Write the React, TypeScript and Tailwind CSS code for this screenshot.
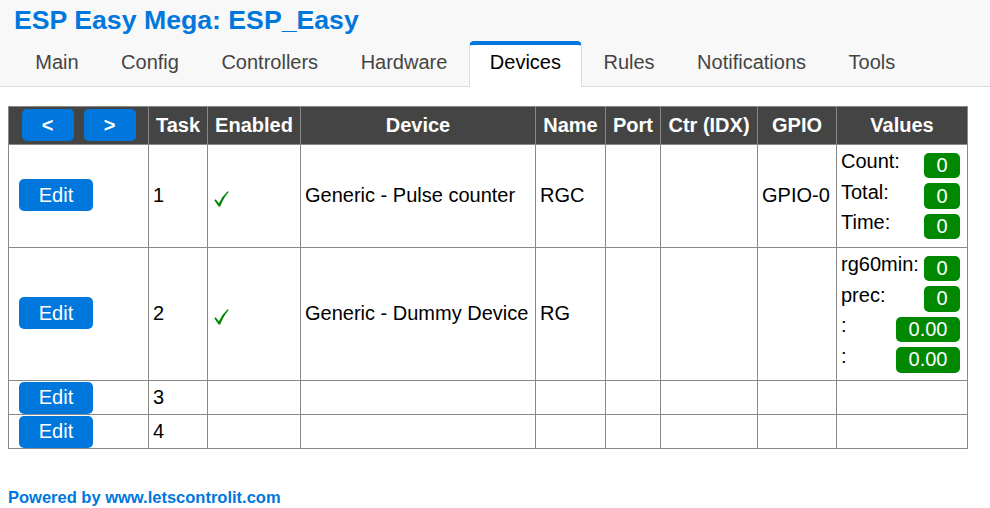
import React from "react";

const tabs = ["Main", "Config", "Controllers", "Hardware", "Devices", "Rules", "Notifications", "Tools"];

function Badge({ v }: { v: string }) {
  return (
    <div className="my-[2.5px] mr-[3px] rounded-[5px] bg-[#080] px-[12.5px] py-[1.25px] text-[20px] leading-[23px] text-white">
      {v}
    </div>
  );
}

function Vals({ items }: { items: [string, string][] }) {
  return (
    <div>
      {items.map(([l, v], i) => (
        <div key={i} className="flex items-start justify-between">
          <span className="whitespace-nowrap leading-[23px]">{l}</span>
          <Badge v={v} />
        </div>
      ))}
    </div>
  );
}

function EditBtn() {
  return (
    <div className="ml-[10px] inline-flex h-[32px] w-[74px] items-center justify-center rounded-[5px] bg-[#07d] text-[20px] leading-[23px] text-white">
      Edit
    </div>
  );
}

const Check = () => (
  <svg width="15" height="16" viewBox="0 0 15 16" className="ml-[2px] mt-[7px] block">
    <path
      d="M0.3 9.2 L1.6 8.3 L4.9 12.2 Q8.2 5.2 13.6 0.2 L14.7 1.1 Q9.6 6.8 6.2 15.6 L4.6 15.6 Z"
      fill="#080"
    />
  </svg>
);

export default function App() {
  const td = "border border-[#888] px-[4px] align-middle";
  const th = "border border-[#888] bg-[#444] px-[4px] text-center align-middle font-bold text-white";
  return (
    <div className="min-h-[508px] bg-white font-['Liberation_Sans',Arial,sans-serif] text-[20px] text-black">
      <div className="border-b border-[#ddd] bg-[#f8f8f8] px-[14px]">
        <h1 className="pt-[5px] text-[26.67px] font-bold leading-[30px] text-[#07d]">ESP Easy Mega: ESP_Easy</h1>
        <div className="mt-[6px] flex items-end">
          {tabs.map((t) => {
            const active = t === "Devices";
            return (
              <div
                key={t}
                className={
                  active
                    ? "-mb-[1px] rounded-t-[5px] border-x border-t-[4px] border-x-[#ddd] border-t-[#07d] bg-white px-[20.25px] pb-[13px] pt-[6px] leading-[23px] text-black"
                    : "-mb-[1px] border-x border-t-[4px] border-transparent px-[20.25px] pb-[13px] pt-[6px] leading-[23px] text-[#444]"
                }
              >
                {t}
              </div>
            );
          })}
        </div>
      </div>

      <table className="ml-[8px] mt-[19px] w-[959px] table-fixed border-collapse">
        <colgroup>
          <col className="w-[140px]" />
          <col className="w-[59px]" />
          <col className="w-[93px]" />
          <col className="w-[235px]" />
          <col className="w-[70px]" />
          <col className="w-[55px]" />
          <col className="w-[97px]" />
          <col className="w-[79px]" />
          <col className="w-[131px]" />
        </colgroup>
        <thead>
          <tr className="h-[38px]">
            <th className={th + " pb-[1px]"}>
              <div className="flex justify-center gap-[10px]">
                <div className="flex h-[32px] w-[52px] items-center justify-center rounded-[5px] bg-[#07d] font-bold">&lt;</div>
                <div className="flex h-[32px] w-[52px] items-center justify-center rounded-[5px] bg-[#07d] font-bold">&gt;</div>
              </div>
            </th>
            <th className={th + " pb-[2px]"}>Task</th>
            <th className={th + " pb-[2px]"}>Enabled</th>
            <th className={th + " pb-[2px]"}>Device</th>
            <th className={th + " pb-[2px]"}>Name</th>
            <th className={th + " pb-[2px]"}>Port</th>
            <th className={th + " pb-[2px]"}>Ctr (IDX)</th>
            <th className={th + " pb-[2px]"}>GPIO</th>
            <th className={th + " pb-[2px]"}>Values</th>
          </tr>
        </thead>
        <tbody>
          <tr className="h-[103px]">
            <td className="border border-[#888] pb-[2px] align-middle"><EditBtn /></td>
            <td className={td + " pb-[2px]"}>1</td>
            <td className={td + " pb-[2px]"}><Check /></td>
            <td className={td + " whitespace-nowrap pb-[2px]"}>Generic - Pulse counter</td>
            <td className={td + " pb-[2px]"}>RGC</td>
            <td className={td}></td>
            <td className={td}></td>
            <td className={td + " whitespace-nowrap pb-[2px]"}>GPIO-0</td>
            <td className={td}>
              <Vals items={[["Count:", "0"], ["Total:", "0"], ["Time:", "0"]]} />
            </td>
          </tr>
          <tr className="h-[133px]">
            <td className="border border-[#888] pb-[2px] align-middle"><EditBtn /></td>
            <td className={td + " pb-[2px]"}>2</td>
            <td className={td + " pb-[2px]"}><Check /></td>
            <td className={td + " whitespace-nowrap pb-[2px]"}>Generic - Dummy Device</td>
            <td className={td + " pb-[2px]"}>RG</td>
            <td className={td}></td>
            <td className={td}></td>
            <td className={td}></td>
            <td className={td}>
              <Vals items={[["rg60min:", "0"], ["prec:", "0"], [":", "0.00"], [":", "0.00"]]} />
            </td>
          </tr>
          {["3", "4"].map((n) => (
            <tr key={n} className="h-[34px]">
              <td className="border border-[#888] p-0 align-middle"><EditBtn /></td>
              <td className={td + " pb-[2px]"}>{n}</td>
              <td className={td}></td>
              <td className={td}></td>
              <td className={td}></td>
              <td className={td}></td>
              <td className={td}></td>
              <td className={td}></td>
              <td className={td}></td>
            </tr>
          ))}
        </tbody>
      </table>

      <div className="ml-[8px] mt-[39px] text-[16.5px] font-bold leading-[19px] text-[#07d]">
        Powered by www.letscontrolit.com
      </div>
    </div>
  );
}
